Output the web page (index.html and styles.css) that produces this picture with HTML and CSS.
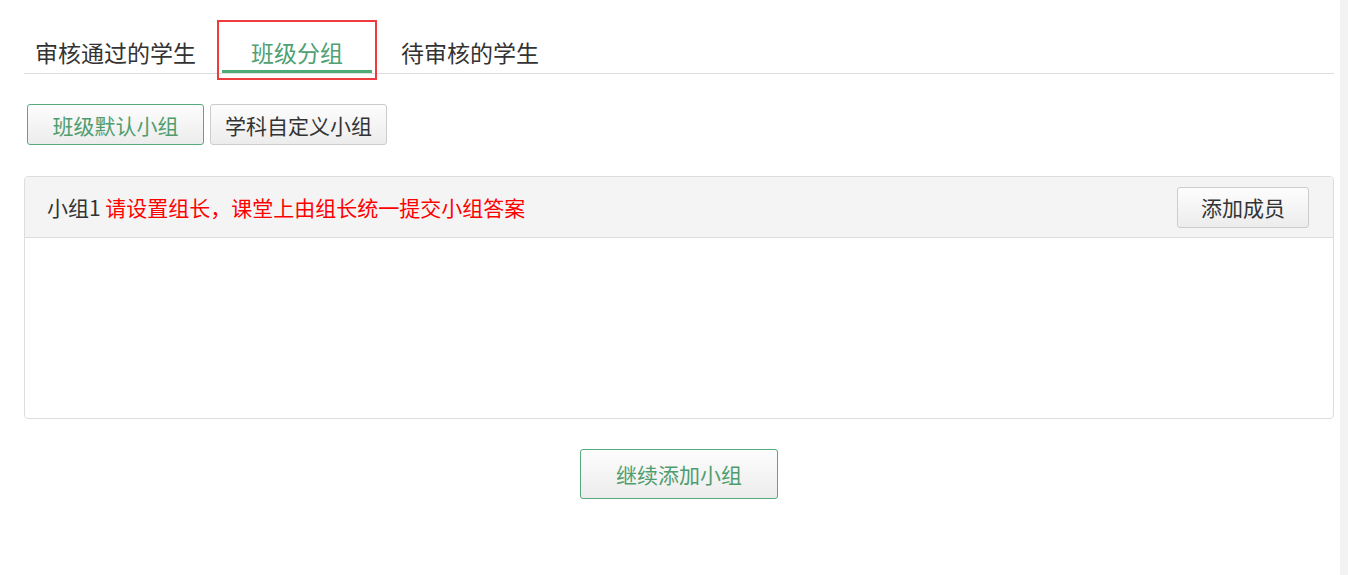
FILE: index.html
```html
<!DOCTYPE html>
<html>
<head>
    <meta charset="utf-8">
    <title>班级分组</title>
    <link rel="stylesheet" href="styles.css">
</head>
<body>
    <div class="page">
        <!-- 顶部标签 -->
        <div class="tabs">
            <div class="tab tab-first">审核通过的学生</div>
            <div class="tab active">班级分组</div>
            <div class="tab tab-last">待审核的学生</div>
        </div>

        <div class="group-types">
            <button class="btn btn-green">班级默认小组</button>
            <button class="btn">学科自定义小组</button>
        </div>

        <div class="panel">
            <div class="panel-head">
                <div class="panel-title">小组1 <span class="tip">请设置组长，课堂上由组长统一提交小组答案</span></div>
                <button class="btn btn-add">添加成员</button>
            </div>
            <div class="panel-body"></div>
        </div>

        <div class="more">
            <button class="btn btn-green btn-more">继续添加小组</button>
        </div>
    </div>
    <div class="scrollbar"></div>
</body>
</html>
```

FILE: styles.css
```css
body {
    margin: 0;
    display: flex;
    min-height: 575px;
    font-family: "Noto Sans CJK SC", "Liberation Sans", sans-serif;
    color: #333;
    background-color: #fff;
}

.page {
    flex: 1;
    padding: 0 6px 0 24px;
}

.scrollbar {
    width: 8px;
    background-color: #f3f3f3;
}

/* tabs */
.tabs {
    display: flex;
    margin-top: 22px;
    border-bottom: 1px solid #dedede;
}

.tab {
    font-size: 23px;
    line-height: 30px;
    padding: 15px 0 3px;
    border-bottom: 3px solid transparent;
    color: #333;
}

.tab-first {
    padding-left: 11px;
    padding-right: 11px;
}

.tab.active {
    position: relative;
    width: 150px;
    margin-left: 15px;
    text-align: center;
    color: #4fa072;
    border-bottom-color: #4fab76;
}

/* red highlight box around the active tab */
.tab.active::after {
    content: "";
    position: absolute;
    top: -2px;
    left: -5px;
    right: -5px;
    bottom: -10px;
    border: 2px solid #ee3b3f;
}

.tab-last {
    margin-left: 29px;
}

/* buttons */
.btn {
    font-family: "Noto Sans CJK SC", "Liberation Sans", sans-serif;
    font-size: 21px;
    color: #333;
    height: 41px;
    padding: 0;
    border: 1px solid #ccc;
    border-radius: 3px;
    background: linear-gradient(#fdfdfd, #ececec);
    cursor: pointer;
}

.btn-green {
    color: #4f9d6e;
    border-color: #56aa7b;
}

.group-types {
    display: flex;
    gap: 6px;
    margin: 30px 0 0 3px;
}

.group-types .btn {
    width: 177px;
}

/* group panel */
.panel {
    margin-top: 31px;
    border: 1px solid #dddddd;
    border-radius: 4px;
    overflow: hidden;
}

.panel-head {
    display: flex;
    justify-content: space-between;
    align-items: center;
    height: 60px;
    padding: 0 24px 0 22px;
    background-color: #f4f4f4;
    border-bottom: 1px solid #dddddd;
}

.panel-title {
    font-size: 21px;
}

.tip {
    color: #ff0000;
}

.btn-add {
    width: 132px;
}

.panel-body {
    height: 180px;
}

.more {
    display: flex;
    justify-content: center;
    margin-top: 30px;
}

.btn-more {
    width: 198px;
    height: 50px;
}
```
